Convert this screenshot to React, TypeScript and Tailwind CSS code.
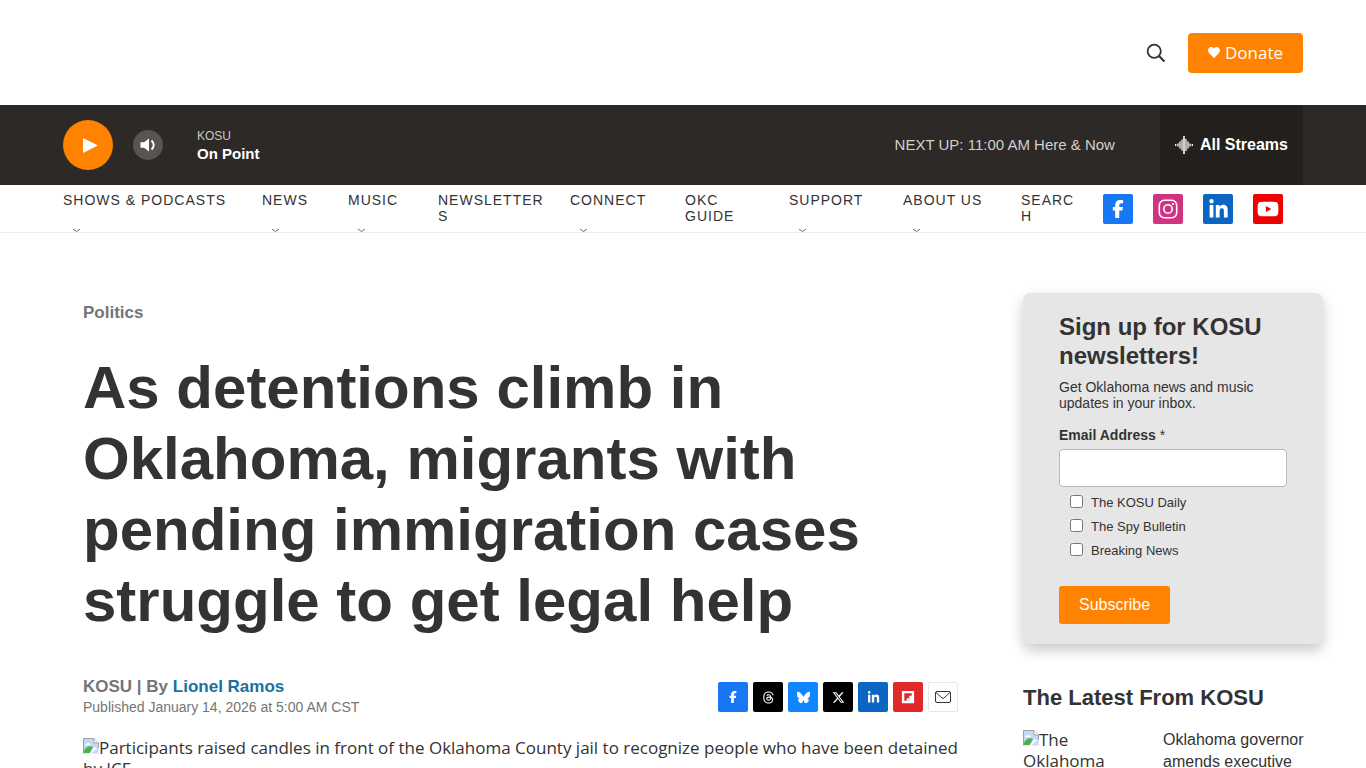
import type { ReactNode } from "react";
import {
  FaBluesky,
  FaFacebookF,
  FaFlipboard,
  FaLinkedinIn,
  FaThreads,
  FaXTwitter,
  FaYoutube,
} from "react-icons/fa6";

interface NavItem {
  label: string;
  width: string;
  hasMenu?: boolean;
}

interface SocialItem {
  label: string;
  color: string;
  icon: ReactNode;
}

const Instagram = () => (
  <svg viewBox="0 0 20 20" className="size-5" fill="none" stroke="currentColor" strokeWidth="1.600">
    <rect x="1.300" y="1.300" width="17.400" height="17.400" rx="5" />
    <circle cx="10" cy="10" r="4.200" />
    <circle cx="15" cy="5" r="1.100" fill="currentColor" stroke="none" />
  </svg>
);

const Envelope = () => (
  <svg viewBox="0 0 16 12" className="h-3 w-4" fill="none" stroke="#333" strokeWidth="1">
    <rect x=".5" y=".5" width="15" height="11" rx="1.500" />
    <path d="M1 1.500 7 7q1 .8 2 0l6-5.500" />
  </svg>
);

const BrokenImage = () => (
  <svg viewBox="0 0 16 16" className="inline-block size-4 align-baseline">
    <path d="M.5.5H11L15.500 5v6.500L11 9l-4 6.500H.5z" fill="#c3d9f5" />
    <path d="M2 7.500a2 2 0 0 1 2-2 2.500 2.500 0 0 1 4 1.500H2z" fill="#fff" />
    <path d="M1 15v-2.500c3-4 5-5 9-3.500L6.500 15z" fill="#4caf50" />
    <path d="M.5 15.500V.5H11L15.500 5v5" fill="none" stroke="#9aa0a6" />
    <path d="M11 .5V5h4.500" fill="#fff" stroke="#9aa0a6" />
    <path d="m8 15.500 7.500-6v6z" fill="#c3d9f5" />
  </svg>
);

const navItems: NavItem[] = [
  { label: "Shows & Podcasts", width: "w-[199px]", hasMenu: true },
  { label: "News", width: "w-[86px]", hasMenu: true },
  { label: "Music", width: "w-[90px]", hasMenu: true },
  { label: "Newsletters", width: "w-[132px]" },
  { label: "Connect", width: "w-[115px]", hasMenu: true },
  { label: "OKC Guide", width: "w-[104px]" },
  { label: "Support", width: "w-[114px]", hasMenu: true },
  { label: "About Us", width: "w-[118px]", hasMenu: true },
  { label: "Search", width: "w-[82px]" },
];

const socialItems: SocialItem[] = [
  { label: "facebook", color: "bg-[#1877f2]", icon: <FaFacebookF className="size-[18px]" /> },
  { label: "instagram", color: "bg-[#d03381]", icon: <Instagram /> },
  { label: "linkedin", color: "bg-[#0a66c2]", icon: <FaLinkedinIn className="size-[21px]" /> },
  { label: "youtube", color: "bg-[#f00000]", icon: <FaYoutube className="size-[22px]" /> },
];

const shareItems: SocialItem[] = [
  { label: "Facebook", color: "bg-[#1877f2]", icon: <FaFacebookF className="size-3" /> },
  { label: "Threads", color: "bg-black", icon: <FaThreads className="size-[13px]" /> },
  { label: "Bluesky", color: "bg-[#1185fe]", icon: <FaBluesky className="size-[13px]" /> },
  { label: "Twitter", color: "bg-black", icon: <FaXTwitter className="size-[13px]" /> },
  { label: "LinkedIn", color: "bg-[#0a66c2]", icon: <FaLinkedinIn className="size-[13px]" /> },
  { label: "Flipboard", color: "bg-[#e12828]", icon: <FaFlipboard className="size-3.5" /> },
  { label: "Email", color: "bg-white border border-[#e6e6e6]", icon: <Envelope /> },
];

const newsletters = ["The KOSU Daily", "The Spy Bulletin", "Breaking News"];

const Header = () => (
  <header className="flex h-[105px] items-center justify-end gap-[22px] px-[63px]">
    <button type="button" aria-label="Show Search" className="flex size-5 items-center justify-center">
      <svg viewBox="0 0 20 20" className="size-5" fill="none" stroke="#333" strokeWidth="1.800">
        <circle cx="8.200" cy="8.200" r="6.600" />
        <path d="m13 13 5.500 5.500" strokeWidth="2.200" />
      </svg>
    </button>
    <a
      href="#donate"
      className="flex h-10 items-center gap-[5px] rounded bg-[#ff8200] px-5 font-['Open_Sans',sans-serif] text-[17px] text-white"
    >
      <svg viewBox="0 0 12 11" className="h-[11px] w-3" fill="currentColor">
        <path d="M6 11 1 6C-.6 4.200 0 1.600 1.600.6 3.200-.4 5 .2 6 1.800 7-.2 8.800-.4 10.400.6 12 1.600 12.600 4.200 11 6z" />
      </svg>
      Donate
    </a>
  </header>
);

const Player = () => (
  <section className="flex h-20 items-center bg-[#2d2926] px-[63px] text-white">
    <button
      type="button"
      aria-label="Play"
      className="flex size-[50px] items-center justify-center rounded-full bg-[#ff8200]"
    >
      <svg viewBox="0 0 15 15" className="ml-1 size-[15px]" fill="currentColor">
        <path d="M0 0v15l15-7.500z" />
      </svg>
    </button>
    <button
      type="button"
      aria-label="Volume"
      className="ml-5 flex size-[30px] items-center justify-center rounded-full bg-[#575451]"
    >
      <svg viewBox="0 0 16 14" className="h-3.5 w-4" fill="currentColor">
        <path d="M.5 4.300h3.500L9 .5v13L4 9.700H.5z" />
        <path d="M11.500 2.500q4.500 4.500 0 9" fill="none" stroke="currentColor" strokeWidth="1.900" />
      </svg>
    </button>
    <div className="ml-[34px] flex-1">
      <p className="text-[12px] leading-[18px] text-[#c9c8c7]">KOSU</p>
      <p className="text-[15px] leading-[18px] font-bold">On Point</p>
    </div>
    <p className="mr-[45px] text-[15px] text-[#d2d0cf]">NEXT UP: 11:00 AM Here &amp; Now</p>
    <button
      type="button"
      className="flex h-full items-center gap-[7px] bg-[#24201d] px-[15px] text-[16px] font-bold"
    >
      <svg viewBox="0 0 18 18" className="size-[18px]" stroke="currentColor" strokeWidth="1.300">
        <path d="M.7 8v2M3 7.500v3M5 5.500v7M7 3.500v11M11 3v12M13 5.500v7M15 7.500v3M17.300 8v2" />
        <path d="M9 0v18" strokeWidth="1.600" />
      </svg>
      All Streams
    </button>
  </section>
);

const Nav = () => (
  <nav className="flex h-12 border-b border-[#eee] px-[63px]">
    <ul className="flex">
      {navItems.map((item) => (
        <li key={item.label} className={item.width}>
          <div className="flex h-full flex-col justify-between pt-[7px] pr-6">
            <a
              href="#nav"
              className="text-[14px] leading-4 tracking-[1px] wrap-anywhere text-[#333] uppercase"
            >
              {item.label}
            </a>
            {item.hasMenu && (
              <button type="button" aria-label={`Open ${item.label}`} className="ml-[9px] flex h-[3px] w-[9px]">
                <svg viewBox="0 0 9 3" className="h-[3px] w-[9px]" fill="none" stroke="#666">
                  <path d="M1 0l3.500 2.500L8 0" />
                </svg>
              </button>
            )}
          </div>
        </li>
      ))}
    </ul>
    <ul className="flex gap-5 pt-[9px]">
      {socialItems.map((item) => (
        <li key={item.label}>
          <a
            href="#social"
            aria-label={item.label}
            className={`flex size-[30px] items-center justify-center rounded-xs text-white ${item.color}`}
          >
            {item.icon}
          </a>
        </li>
      ))}
    </ul>
  </nav>
);

const Article = () => (
  <article className="min-w-0 flex-1 pt-2.5">
    <a href="#politics" className="block text-[17px] leading-5 font-bold text-[#757575]">
      Politics
    </a>
    <h1 className="mt-[29px] text-[60px] leading-[71px] font-bold text-[#333]">
      As detentions climb in Oklahoma, migrants with pending immigration cases struggle to get legal help
    </h1>
    <div className="mt-[41px] flex items-center justify-between pr-[5px]">
      <div>
        <p className="text-[17px] leading-5 font-bold text-[#757575]">
          KOSU | By{" "}
          <a href="#author" className="text-[#1772a0]">
            Lionel Ramos
          </a>
        </p>
        <p className="text-[14px] leading-5 text-[#757575]">Published January 14, 2026 at 5:00 AM CST</p>
      </div>
      <ul className="flex gap-[5px]">
        {shareItems.map((item) => (
          <li key={item.label}>
            <a
              href="#share"
              aria-label={item.label}
              className={`flex size-[30px] items-center justify-center rounded-xs text-white ${item.color}`}
            >
              {item.icon}
            </a>
          </li>
        ))}
      </ul>
    </div>
    <p className="mt-5 font-['Open_Sans',sans-serif] text-[17px] leading-[21px] text-[#333]">
      <BrokenImage />
      Participants raised candles in front of the Oklahoma County jail to recognize people who have been detained by
      ICE.
    </p>
  </article>
);

const Signup = () => (
  <form className="rounded-lg bg-[#e6e6e6] px-9 pt-[19px] pb-5 text-[#333] shadow-[0_6px_14px_rgba(0,0,0,0.22)]">
    <h2 className="text-[24px] leading-[29px] font-bold">Sign up for KOSU newsletters!</h2>
    <p className="mt-[9px] text-[14px] leading-4">Get Oklahoma news and music updates in your inbox.</p>
    <label htmlFor="email" className="mt-4 block text-[14px] leading-4 font-bold">
      Email Address <span className="font-normal">*</span>
    </label>
    <input id="email" type="email" className="mt-1.5 h-[38px] w-full rounded-sm border border-[#bbb] bg-white px-2" />
    <ul className="mt-1 ml-[11px]">
      {newsletters.map((name) => (
        <li key={name}>
          <label className="flex h-6 items-center gap-2 text-[13px]">
            <input type="checkbox" className="mb-1 size-[13px]" />
            {name}
          </label>
        </li>
      ))}
    </ul>
    <button type="submit" className="mt-[23px] block h-[38px] rounded-[3px] bg-[#ff8200] px-5 text-[16px] text-white">
      Subscribe
    </button>
  </form>
);

const Latest = () => (
  <section className="mt-10 text-[#333]">
    <h2 className="text-[22px] leading-7 font-bold">The Latest From KOSU</h2>
    <a href="#latest" className="mt-[17px] flex gap-10">
      <span className="w-[100px] font-['Open_Sans',sans-serif] text-[17px] leading-[21px]">
        <BrokenImage />
        The Oklahoma Capitol
      </span>
      <span className="flex-1 text-[16px] leading-[22px]">Oklahoma governor amends executive order</span>
    </a>
  </section>
);

const App = () => {
  return (
    <div className="min-h-screen bg-white font-['Liberation_Sans',Arial,sans-serif]">
      <Header />
      <Player />
      <Nav />
      <main className="flex gap-[60px] pt-[60px] pr-[43px] pl-[83px]">
        <Article />
        <aside className="w-[300px] shrink-0">
          <Signup />
          <Latest />
        </aside>
      </main>
    </div>
  );
};

export default App;
